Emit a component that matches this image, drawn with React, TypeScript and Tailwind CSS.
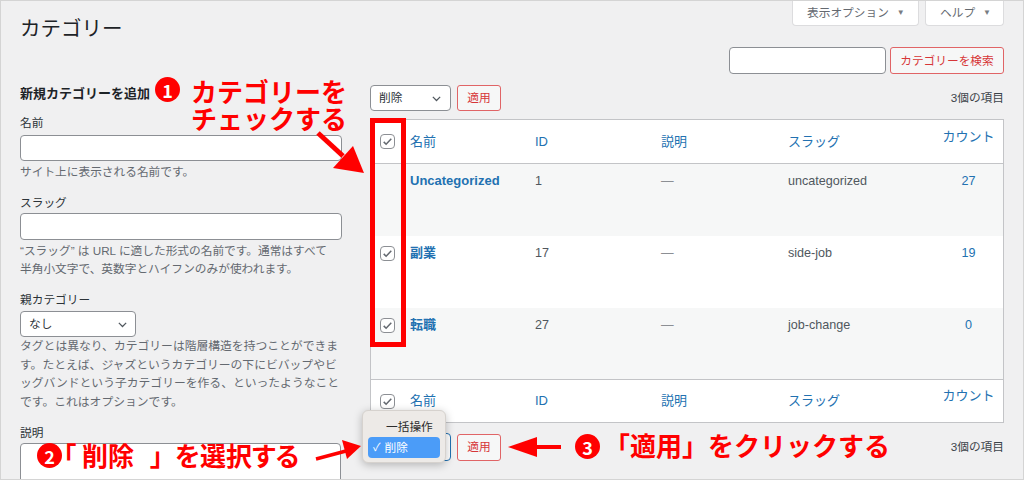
import React from 'react';

const rows = [
  { name: 'Uncategorized', id: '1', slug: 'uncategorized', count: '27', check: false, bg: 'bg-[#f6f7f7]', h: 'h-[72px]' },
  { name: '副業', id: '17', slug: 'side-job', count: '19', check: true, bg: 'bg-white', h: 'h-[72px]' },
  { name: '転職', id: '27', slug: 'job-change', count: '0', check: true, bg: 'bg-[#f6f7f7]', h: 'h-[71px]' },
];

function Check({ checked }: { checked: boolean }) {
  return (
    <span className="flex h-[15px] w-[15px] items-center justify-center rounded-[4px] border border-[#8c8f94] bg-white">
      {checked && (
        <svg viewBox="0 0 16 16" className="h-[11px] w-[11px]">
          <path d="M2.5 8.5l3.5 3.5 7.5-8" stroke="#646970" strokeWidth="2.2" fill="none" />
        </svg>
      )}
    </span>
  );
}

function Chevron() {
  return (
    <svg viewBox="0 0 16 16" className="h-[13px] w-[13px]">
      <path d="M3.5 6l4.5 4.5L12.5 6" stroke="#50575e" strokeWidth="1.5" fill="none" />
    </svg>
  );
}

function HeadRow({ top }: { top: boolean }) {
  return (
    <div
      className={`grid grid-cols-[29px_125px_126px_127px_1fr_69px] items-center bg-white text-[13px] text-[#2271b1] ${
        top ? 'h-[44px] border-b border-[#c3c4c7]' : 'h-[43px] border-t border-[#c3c4c7]'
      }`}
    >
      <div className="pl-[9px]">
        <Check checked />
      </div>
      <div className="pl-[10px]">名前</div>
      <div className="pl-[10px]">ID</div>
      <div className="pl-[10px]">説明</div>
      <div className="pl-[10px]">スラッグ</div>
      <div className="-mt-[10px] text-center">カウント</div>
    </div>
  );
}

function Circle({ n }: { n: string }) {
  return (
    <span className="flex h-[25px] w-[25px] items-center justify-center rounded-full bg-[#ff0000] text-[18px] font-bold leading-none text-white">
      {n}
    </span>
  );
}

export default function App() {
  return (
    <div
      className="relative h-[480px] w-[1024px] overflow-hidden bg-[#f0f0f1] text-[#2c3338]"
      style={{ fontFamily: '"Liberation Sans", "Noto Sans CJK JP", sans-serif' }}
    >
      {/* header */}
      <div className="flex items-start justify-between px-[20px]">
        <h1 className="pt-[16px] text-[20.5px] leading-[26px] text-[#1d2327]">カテゴリー</h1>
        <div className="flex gap-[6px] text-[11.7px] text-[#646970]">
          <div className="flex h-[26px] w-[127px] items-center gap-[8px] rounded-b-[4px] border border-t-0 border-[#dcdcde] bg-white pl-[14px]">
            表示オプション <span className="text-[8px] text-[#787c82]">▼</span>
          </div>
          <div className="flex h-[26px] w-[79px] items-center gap-[8px] rounded-b-[4px] border border-t-0 border-[#dcdcde] bg-white pl-[14px]">
            ヘルプ <span className="text-[8px] text-[#787c82]">▼</span>
          </div>
        </div>
      </div>

      {/* search */}
      <div className="mt-[5px] flex justify-end gap-[4px] px-[20px]">
        <div className="h-[27px] w-[157px] rounded-[4px] border border-[#8c8f94] bg-white" />
        <div className="flex h-[27px] w-[114px] items-center justify-center rounded-[3px] border border-[#e06466] bg-[#f6f7f7] text-[11.7px] text-[#d63638]">
          カテゴリーを検索
        </div>
      </div>

      <div className="mt-[11px] flex gap-[28px] px-[20px]">
        {/* left form */}
        <div className="w-[322px] shrink-0">
          <h2 className="text-[13px] font-bold leading-[18px] text-[#1d2327]">新規カテゴリーを追加</h2>
          <div className="mt-[11px] text-[11.7px] leading-[18px]">名前</div>
          <div className="mt-[3px] h-[26px] rounded-[4px] border border-[#8c8f94] bg-white" />
          <p className="mt-[2px] text-[11.7px] leading-[18px] text-[#646970]">サイト上に表示される名前です。</p>
          <div className="mt-[13px] text-[11.7px] leading-[18px]">スラッグ</div>
          <div className="mt-[1px] h-[27px] rounded-[4px] border border-[#8c8f94] bg-white" />
          <p className="mt-[2px] whitespace-nowrap text-[11.7px] leading-[18px] text-[#646970]">
            “スラッグ” は URL に適した形式の名前です。通常はすべて
            <br />
            半角小文字で、英数字とハイフンのみが使われます。
          </p>
          <div className="mt-[13px] text-[11.7px] leading-[18px]">親カテゴリー</div>
          <div className="mt-[2px] flex h-[26px] w-[116px] items-center justify-between rounded-[4px] border border-[#8c8f94] bg-white pl-[8px] pr-[6px] text-[11.7px]">
            なし
            <Chevron />
          </div>
          <p className="whitespace-nowrap text-[11.8px] leading-[18.5px] text-[#646970]">
            タグとは異なり、カテゴリーは階層構造を持つことができま
            <br />
            す。たとえば、ジャズというカテゴリーの下にビバップやビ
            <br />
            ッグバンドという子カテゴリーを作る、といったようなこと
            <br />
            です。これはオプションです。
          </p>
          <div className="mt-[13px] text-[11.7px] leading-[18px]">説明</div>
          <div className="mt-[1px] h-[70px] w-[321px] rounded-[4px] border border-[#8c8f94] bg-white" />
        </div>

        {/* right list */}
        <div className="flex-1">
          <div className="flex h-[26px] items-center gap-[6px]">
            <div className="flex h-[26px] w-[81px] items-center justify-between rounded-[4px] border border-[#8c8f94] bg-white pl-[8px] pr-[7px] text-[11.7px]">
              削除
              <Chevron />
            </div>
            <div className="flex h-[26px] w-[44px] items-center justify-center rounded-[3px] border border-[#e06466] bg-[#f6f7f7] text-[11.7px] text-[#d63638]">
              適用
            </div>
            <div className="ml-auto text-[11.7px] text-[#3c434a]">3個の項目</div>
          </div>

          <div className="mt-[8px] border border-[#c3c4c7]">
            <HeadRow top />
            {rows.map((r) => (
              <div
                key={r.id}
                className={`grid grid-cols-[29px_125px_126px_127px_1fr_69px] items-start pt-[8px] text-[12.6px] leading-[18px] ${r.bg} ${r.h}`}
              >
                <div className="flex h-[18px] items-center pl-[9px]">{r.check && <Check checked />}</div>
                <div className="pl-[10px] text-[13px] font-bold text-[#2271b1]">{r.name}</div>
                <div className="pl-[10px] text-[#50575e]">{r.id}</div>
                <div className="pl-[10px] text-[#8c8f94]">—</div>
                <div className="pl-[10px] text-[#50575e]">{r.slug}</div>
                <div className="text-center text-[#2271b1]">{r.count}</div>
              </div>
            ))}
            <HeadRow top={false} />
          </div>

          <div className="mt-[10px] flex h-[28px] items-center gap-[6px]">
            <div className="h-[28px] w-[81px] rounded-[4px] border border-[#2271b1] bg-white" />
            <div className="flex h-[27px] w-[44px] items-center justify-center rounded-[3px] border border-[#e06466] bg-[#f6f7f7] text-[11.7px] text-[#d63638]">
              適用
            </div>
            <div className="ml-auto text-[11.7px] text-[#3c434a]">3個の項目</div>
          </div>
        </div>
      </div>

      {/* open bulk-action menu */}
      <div className="absolute left-[362px] top-[410px] w-[84px] rounded-[6px] border border-[#d6d2ce] bg-[#edeae7] px-[5px] pb-[4px] pt-[6px] text-[11.7px] shadow-[0_2px_8px_rgba(0,0,0,0.25)]">
        <div className="h-[19px] pl-[18px] leading-[19px] text-[#2c2c2c]">一括操作</div>
        <div className="mt-[1px] flex h-[21px] items-center gap-[4px] rounded-[4px] bg-[#4b9cf8] pl-[5px] text-white">
          <span className="text-[11px]">✓</span>削除
        </div>
      </div>

      {/* annotations */}
      <div
        className="pointer-events-none absolute inset-0 font-bold text-[#ff0000]"
        style={{ fontFamily: '"Noto Sans CJK JP", sans-serif' }}
      >
        <div className="absolute left-[155px] top-[77px]">
          <Circle n="1" />
        </div>
        <div className="absolute left-[191px] top-[77px] text-[26px] leading-[27px]">
          <div>カテゴリーを</div>
          <div>チェックする</div>
        </div>

        <div className="absolute left-[370px] top-[118px] h-[229px] w-[36px] border-[5px] border-[#ff0000]" />

        <div className="absolute left-[37px] top-[443px]">
          <Circle n="2" />
        </div>
        <div className="absolute left-[63px] top-[440px] flex text-[26px] leading-[30px] [font-feature-settings:'palt']">
          <span>「</span>
          <span className="ml-[6px]">削除</span>
          <span className="ml-[16px]">」</span>
          <span className="ml-[12px]">を選択する</span>
        </div>

        <div className="absolute left-[575px] top-[434px]">
          <Circle n="3" />
        </div>
        <div className="absolute left-[604px] top-[430px] text-[26px] leading-[30px]">「適用」をクリックする</div>

        <svg className="absolute inset-0" width="1024" height="480">
          <line x1="318" y1="133" x2="343" y2="156" stroke="#ff0000" strokeWidth="5" />
          <polygon points="364,173 353,146 333,168" fill="#ff0000" />
          <line x1="316" y1="459" x2="346" y2="451" stroke="#ff0000" strokeWidth="3.5" />
          <polygon points="361,446 342,440 347,459" fill="#ff0000" />
          <line x1="535" y1="447" x2="561" y2="447" stroke="#ff0000" strokeWidth="4" />
          <polygon points="508,447 537,437 537,457" fill="#ff0000" />
        </svg>
      </div>

      <div className="pointer-events-none absolute inset-0 border border-[#d4d4d4]" />
    </div>
  );
}
